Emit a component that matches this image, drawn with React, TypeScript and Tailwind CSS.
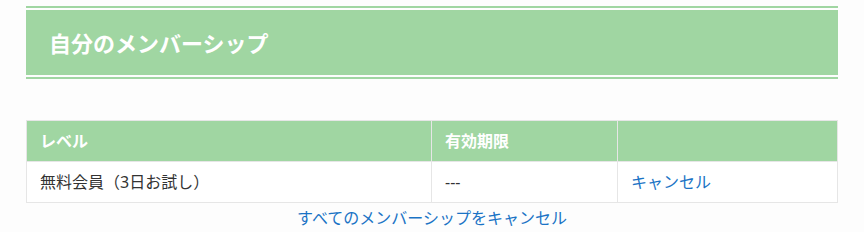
import React from "react";

const rows = [
  { level: "無料会員（3日お試し）", expires: "---", action: "キャンセル" },
];

function MembershipTable() {
  return (
    <table className="mt-[41px] w-full table-fixed border-collapse border border-[#e6e6e6] text-[16px] leading-6">
      <thead>
        <tr className="bg-[#a0d6a2] text-white">
          <th className="h-[41px] w-[405px] border border-[#e6e6e6] px-[13px] text-left font-bold">レベル</th>
          <th className="h-[41px] w-[186px] border border-[#e6e6e6] px-[13px] text-left font-bold">有効期限</th>
          <th className="h-[41px] border border-[#e6e6e6] px-[13px] text-left font-bold"></th>
        </tr>
      </thead>
      <tbody>
        {rows.map((row) => (
          <tr key={row.level} className="bg-white text-[#333333]">
            <td className="h-[41px] border border-[#e6e6e6] px-[13px]">{row.level}</td>
            <td className="h-[41px] border border-[#e6e6e6] px-[13px]">{row.expires}</td>
            <td className="h-[41px] border border-[#e6e6e6] px-[13px]">
              <a href="#" className="text-[#1a73c5]">{row.action}</a>
            </td>
          </tr>
        ))}
      </tbody>
    </table>
  );
}

export default function App() {
  return (
    <div
      className="min-h-[232px] bg-[#fdfdfd] px-[26px] pt-[6px]"
      style={{ fontFamily: '"Noto Sans", "Noto Sans CJK JP", sans-serif' }}
    >
      <div className="border-y-2 border-[#a0d6a2] py-[2px]">
        <div className="flex h-[65px] items-center bg-[#a0d6a2] pl-[23px]">
          <h2 className="text-[22px] font-bold leading-8 text-white">自分のメンバーシップ</h2>
        </div>
      </div>

      <MembershipTable />

      <div className="mt-[3px] text-center text-[16px] leading-6">
        <a href="#" className="text-[#1a73c5]">すべてのメンバーシップをキャンセル</a>
      </div>
    </div>
  );
}
